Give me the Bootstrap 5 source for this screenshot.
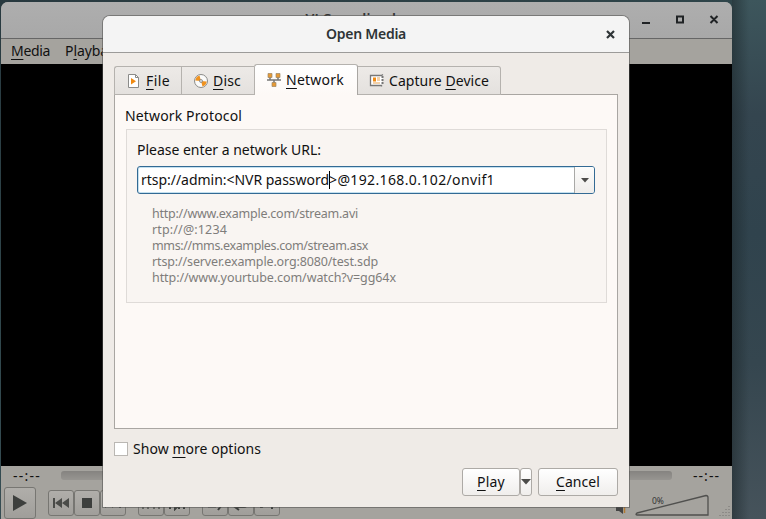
<!DOCTYPE html>
<html lang="en">
<head>
<meta charset="utf-8">
<meta name="viewport" content="width=device-width, initial-scale=1">
<title>Open Media</title>
<link href="https://cdn.jsdelivr.net/npm/bootstrap@5.3.0/dist/css/bootstrap.min.css" rel="stylesheet">
<style>
body{width:766px;height:519px;font-family:"Noto Sans",sans-serif;font-size:14px;line-height:20px;color:#111;background:linear-gradient(160deg,#28393f 0%,#30474c 40%,#3b5158 85%,#43525c 100%)}
.desk-edge{left:732px;top:0;width:34px;height:519px;background:linear-gradient(90deg,rgba(25,35,38,.5),transparent 50%),linear-gradient(#3d565c,#34454f 22%,#30434d 45%,#35464f 70%,#46535b)}
u{text-decoration-thickness:1px;text-underline-offset:3px;text-decoration-skip-ink:none}
.player{left:1px;top:2px;width:731px;height:517px;border-radius:7px 7px 0 0;background:#a5a39e}
.player-title{height:37px;background:linear-gradient(#aeaeae,#a8a8a8);border-bottom:1px solid #666;font-weight:600}
.player-name{top:7px;left:0;right:0;color:#333}
.player-menu{height:25px;padding:2px 0 0 10px;gap:15px}
.video{height:402px;background:#000}
.seek{height:19px;padding:0 12px}
.seek-bar{height:9px;margin:0 21px 0 20px;border-radius:3px;background:linear-gradient(#858380,#979591)}
.controls{padding:2px 0 0 3px}
.ctl-group{margin:3px 0 0 12px}
.ctl{border:1px solid #777672;border-radius:3px;background:linear-gradient(#b0aeaa,#a09e9a);width:26px;height:26px}
.ctl-play{width:32px;height:32px}
.ctl svg,.icon{display:block;flex:none}
.dlg{left:103px;top:16px;width:526px;height:491px;border-radius:7px 7px 0 0;background:#efebe7;box-shadow:0 0 0 1px rgba(80,80,78,.55);z-index:2}
.dlg-title{height:37px;border-bottom:1px solid #9c9b99;background:#f4f4f4;border-radius:7px 7px 0 0;font-weight:600;color:#2e3436}
.dlg-close{right:14px;top:14px}
.tabs-strip{height:31px;margin:11px 11px 0;z-index:1}
.tab-item{height:29px;border:1px solid #b5b2ae;border-right-width:0;background:linear-gradient(#edeae7,#e4e1de);padding:1px 0 0 11px}
.tab-item .tx{margin-left:4px}
.tab-item:first-child{border-top-left-radius:3px}
.tab-item:last-child{border-right-width:1px;border-top-right-radius:3px}
.tab-item.current{height:31px;background:linear-gradient(#fff,#fdf9f6);border-bottom:0;border-right:1px solid #a9a6a2;border-radius:3px 3px 0 0;padding-bottom:2px}
.tab-item.current + .tab-item{border-left:0}
.pane{margin:-1px 11px 0;height:335px;border:1px solid #a9a6a2;background:#fdf9f6;padding:11px 10px 0 10px}
.group{border:1px solid #dfdbd8;background:#f9f5f2;height:174px;margin:3px 0 0 1px;padding:10px 11px 0 10px}
.url-box{height:28px;margin-top:6px;border:1px solid #336a94;border-radius:3px;background:#fff;box-shadow:inset 0 0 0 1px #c4e0ef}
.url-text{padding-left:3px;white-space:pre}
.caret{width:1px;height:18px;background:#000;margin-right:-1px}
.url-drop{width:20px;border-left:1px solid #a9a9a7;background:linear-gradient(#fcfcfb,#efedeb);border-radius:0 2px 2px 0}
.hints{margin:12px 0 0 15px;font-size:12.5px;line-height:16px;color:#7f7d7b}
.check{width:14px;height:14px;border:1px solid #bab7b3;background:#fff}
.more{margin:10px 11px 0;gap:5px}
.push{height:28px;border:1px solid #adaaa6;border-radius:3px;background:linear-gradient(#fff,#f0eeec);padding:0;color:#111}
.push-play{width:58px}
.push-drop{width:12px}
.push-cancel{width:80px;margin-left:6px}
.foot{margin:9px 11px 0}
.tx{display:inline-block;white-space:pre}
.tab-file{width:67px}
.tab-disc{width:73px}
.tab-net{width:104px}
.tab-cap{width:143px}
</style>
</head>
<body class="position-relative overflow-hidden m-0">
<div class="desk-edge position-absolute"></div>
<main class="player position-absolute overflow-hidden">
  <header class="player-title d-flex justify-content-end position-relative">
    <div class="player-name position-absolute text-center"><span class="tx" data-w="122">VLC media player</span></div>
    <svg class="icon" width="92" height="36" fill="none" stroke="#202325" stroke-width="2"><path d="M2 21h8M37 14.500h6v6h-6zM70.500 14l7 7M77.500 14l-7 7"/></svg>
  </header>
  <nav class="player-menu d-flex"><span class="tx" data-w="39"><u>M</u>edia</span><span class="tx" data-w="57">P<u>l</u>ayback</span></nav>
  <div class="video"></div>
  <div class="seek d-flex align-items-center"><span class="tx" data-w="28">--:--</span><div class="seek-bar flex-grow-1"></div><span class="tx" data-w="27">--:--</span></div>
  <div class="controls d-flex align-items-start">
    <div class="ctl ctl-play d-flex align-items-center justify-content-center"><svg width="14" height="18" fill="#3d3f3d"><path d="M0 1l14 8-14 8z"/></svg></div>
    <div class="ctl-group d-flex">
      <div class="ctl d-flex align-items-center justify-content-center"><svg width="16" height="12" fill="#4a4b48"><path d="M0 1h2v10H0zM9 1v10L2 6zM16 1v10L9 6z"/></svg></div>
      <div class="ctl d-flex align-items-center justify-content-center"><svg width="10" height="10" fill="#3d3f3d"><path d="M0 0h10v10H0z"/></svg></div>
      <div class="ctl d-flex align-items-center justify-content-center"><svg width="16" height="12" fill="#4a4b48"><path d="M0 1v10l7-5zM7 1v10l7-5zM14 1h2v10h-2z"/></svg></div>
    </div>
    <div class="ctl-group d-flex">
      <div class="ctl d-flex align-items-center justify-content-center"><svg width="18" height="16" fill="none" stroke="#666763" stroke-width="2"><path d="M1 14V2h5v12M12 14V2h5v12"/></svg></div>
      <div class="ctl d-flex align-items-center justify-content-center"><svg width="16" height="16" fill="none" stroke="#3d3f3d" stroke-width="2"><path d="M1 2v12M15 2v12M6 2v12l4-4V2M10 8v6"/></svg></div>
    </div>
    <div class="ctl-group d-flex">
      <div class="ctl d-flex align-items-center justify-content-center"><svg width="16" height="16" fill="none" stroke="#3d3f3d" stroke-width="2"><path d="M1 11.500h8M1 7h8M11 6h3v5l-3 4"/></svg></div>
      <div class="ctl d-flex align-items-center justify-content-center"><svg width="16" height="16" fill="none" stroke="#3d3f3d" stroke-width="2"><path d="M2 12h9q3 0 3-4V4H4M6 9l-4 3 4 3"/></svg></div>
      <div class="ctl d-flex align-items-center justify-content-center"><svg width="16" height="16" fill="none" stroke="#3d3f3d" stroke-width="2"><path d="M1 12h2l7-8h3M8 11h6M13 8v6"/></svg></div>
    </div>
    <svg class="icon ms-auto" width="124" height="32" fill="none"><path d="M8 20h3l4-4v11l-4-3H8z" fill="#444"/><path d="M16.500 18v8" stroke="#b37b32" stroke-width="1.500"/><path d="M29 26L98 8.500q2 0 2 2V28H29q-2 0 0-2z" stroke="#50504e" stroke-width="1.300"/><path d="M121 19v12M118 22v9M115 25v6M112 28v3" stroke="#747370" stroke-dasharray="1 2"/><text x="44" y="16.500" font-size="8.500" fill="#333">0%</text></svg>
  </div>
</main>

<section class="dlg position-absolute">
  <header class="dlg-title d-flex align-items-center justify-content-center position-relative"><span class="tx" data-w="80">Open Media</span>
    <svg class="dlg-close position-absolute" width="9" height="9" stroke="#2e3436" stroke-width="2.200"><path d="M1 1l7 7M8 1L1 8"/></svg></header>
  <div class="tabs-strip d-flex align-items-end position-relative">
    <div class="tab-item tab-file d-flex align-items-center">
      <svg class="icon" width="16" height="16"><path d="M2.500 1.500h7l3 3v10h-10z" fill="#fff" stroke="#8b8b89"/><path d="M9.500 1.500v3h3" fill="none" stroke="#8b8b89"/><path d="M5 5l5 3.200-5 3.200z" fill="#f08a12"/></svg>
      <span class="tx" data-w="24"><u>F</u>ile</span></div>
    <div class="tab-item tab-disc d-flex align-items-center">
      <svg class="icon" width="16" height="16"><circle cx="8" cy="8" r="6.500" fill="#fbfbfa" stroke="#8b8b89"/><path d="M8 8L2.300 7.500A6 6 0 0 1 6.500 2.500zM8 8l5.700.5a6 6 0 0 1-4.200 5z" fill="#f0921e"/><circle cx="8" cy="8" r="1.500" fill="#ddd" stroke="#777" stroke-width=".7"/></svg>
      <span class="tx" data-w="28"><u>D</u>isc</span></div>
    <div class="tab-item tab-net current d-flex align-items-center">
      <svg class="icon" width="16" height="16"><path d="M1 8h14M4 5v3M12 5v3M8 8v3" stroke="#777" stroke-width="1.500"/><path d="M2 1.500h4v4H2zM10 1.500h4v4h-4zM6 10.500h4v4H6z" fill="#e79a35" stroke="#9a8668" stroke-width=".7"/></svg>
      <span class="tx" data-w="58"><u>N</u>etwork</span></div>
    <div class="tab-item tab-cap d-flex align-items-center">
      <svg class="icon" width="16" height="16"><path d="M14 1.500l-1.500 1H1.500v10h11v1" fill="#fff" stroke="#777" stroke-width="1.300"/><path d="M13.500 3v8" stroke="#777" stroke-width="2" stroke-dasharray="2 1"/><path d="M4 4.500h3v4H4z" fill="#f08a12"/><path d="M8 5h3M8 7h3M4 10h7" stroke="#e7a353"/></svg>
      <span class="tx" data-w="100">Capture <u>D</u>evice</span></div>
  </div>
  <div class="pane">
    <div><span class="tx" data-w="117">Network Protocol</span></div>
    <div class="group">
      <div><span class="tx" data-w="184">Please enter a network URL:</span></div>
      <div class="url-box d-flex">
        <div class="url-text d-flex align-items-center flex-grow-1"><span class="tx" data-w="188">rtsp://admin:&lt;NVR password</span><span class="caret"></span><span class="tx" data-w="166">&gt;@192.168.0.102/onvif1</span></div>
        <div class="url-drop d-flex align-items-center justify-content-center"><svg width="8" height="5"><path d="M0 0h8L4 4.500z" fill="#4c4c4a"/></svg></div>
      </div>
      <div class="hints">
        <div><span class="tx" data-w="206">http://www.example.com/stream.avi</span></div>
        <div><span class="tx" data-w="75">rtp://@:1234</span></div>
        <div><span class="tx" data-w="216">mms://mms.examples.com/stream.asx</span></div>
        <div><span class="tx" data-w="226">rtsp://server.example.org:8080/test.sdp</span></div>
        <div><span class="tx" data-w="244">http://www.yourtube.com/watch?v=gg64x</span></div>
      </div>
    </div>
  </div>
  <div class="more d-flex align-items-center"><span class="check"></span><span class="tx" data-w="128">Show <u>m</u>ore options</span></div>
  <div class="foot d-flex justify-content-end">
    <button class="push push-play d-flex align-items-center justify-content-center"><span class="tx" data-w="28"><u>P</u>lay</span></button>
    <button class="push push-drop d-flex align-items-center justify-content-center"><svg class="icon" width="10" height="6"><path d="M0 0h10L5 5.500z" fill="#4c4c4a"/></svg></button>
    <button class="push push-cancel d-flex align-items-center justify-content-center"><span class="tx" data-w="44"><u>C</u>ancel</span></button>
  </div>
</section>
<script src="https://cdn.jsdelivr.net/npm/bootstrap@5.3.0/dist/js/bootstrap.bundle.min.js"></script>
<script>
// Fit each label's tracking to its width on the form.
document.querySelectorAll('[data-w]').forEach(function (el) {
  var n = el.textContent.length;
  el.style.letterSpacing = ((+el.dataset.w - el.getBoundingClientRect().width) / n) + 'px';
});
</script>
</body>
</html>
